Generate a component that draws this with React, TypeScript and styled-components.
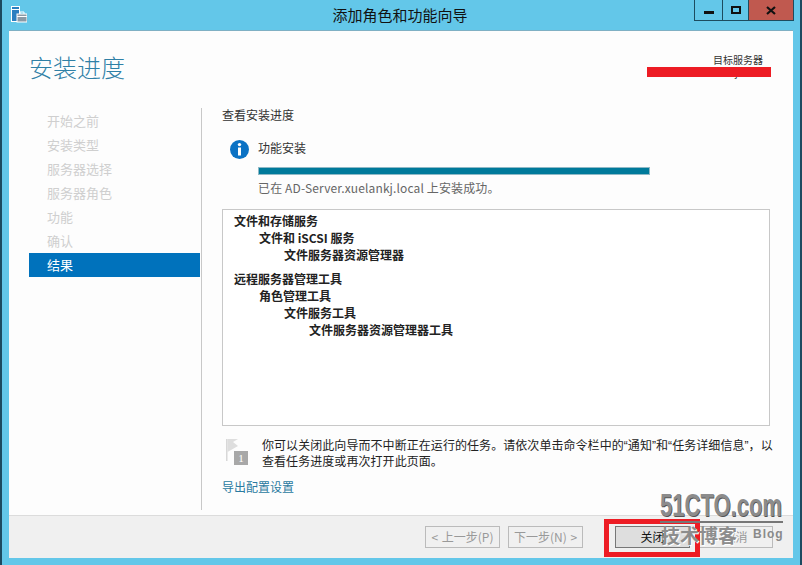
import styled, { createGlobalStyle } from "styled-components";

const GlobalStyle = createGlobalStyle`
    html, body {
        margin: 0;
        padding: 0;
        width: 802px;
        height: 565px;
        overflow: hidden;
    }
    body {
        font-family: "Noto Sans CJK SC", "Liberation Sans", sans-serif;
        font-size: 12px;
        color: #333;
    }
`

const Frame = styled.div`
    position: relative;
    width: 802px;
    height: 565px;
    box-sizing: border-box;
    background: #63c7e9;
    display: flex;
    flex-direction: column;
    border-left: 2px solid #1c4a60;
    border-right: 2px solid #1c4a60;
    padding: 0 7px 7px 7px;
`
const TitleBar = styled.div`
    height: 30px;
    flex: none;
    display: flex;
    align-items: flex-start;
    position: relative;
`
const AppIcon = styled.svg`
    position: absolute;
    left: 2px;
    top: 6px;
`
const TitleText = styled.div`
    width: 100%;
    text-align: center;
    font-size: 15px;
    line-height: 29px;
    color: #111;
    padding-right: 2px;
`
const Controls = styled.div`
    position: absolute;
    right: -1px;
    top: 0;
    display: flex;
    height: 21px;
    border: 1px solid #1d4c5f;
    border-top: none;
    box-sizing: border-box;
`
const ControlButton = styled.div<{ $w: number; $close?: boolean }>`
    width: ${(p) => p.$w}px;
    display: flex;
    align-items: center;
    justify-content: center;
    background: ${(p) => (p.$close ? "#c0594f" : "transparent")};
    & + & {
        border-left: 1px solid #1d4c5f;
    }
`
const Client = styled.div`
    flex: 1;
    min-height: 0;
    background: #fdfdfd;
    border-top: 1px solid #7fb0c4;
    display: flex;
    flex-direction: column;
`
const Header = styled.div`
    height: 77px;
    flex: none;
    display: flex;
    justify-content: space-between;
    padding: 0 30px 0 20px;
`
const PageTitle = styled.h1`
    margin: 16px 0 0;
    font-size: 24px;
    line-height: 40px;
    font-weight: 300;
    color: #2f80a6;
`
const ServerBlock = styled.div`
    margin-top: 23px;
    font-size: 10px;
    line-height: 12px;
    color: #333;
    text-align: right;
`
const Body = styled.div`
    flex: 1;
    min-height: 0;
    display: flex;
    padding-left: 20px;
`
const Sidebar = styled.nav`
    width: 173px;
    flex: none;
    box-sizing: border-box;
    border-right: 1px solid #c8c8c8;
    padding-top: 1px;
    margin-bottom: 5px;
`
const NavItem = styled.div<{ $active?: boolean }>`
    height: 24px;
    width: 171px;
    line-height: 24px;
    font-size: 13px;
    padding-left: 18px;
    box-sizing: border-box;
    color: ${(p) => (p.$active ? "#fff" : "#cfcfcf")};
    background: ${(p) => (p.$active ? "#0072bc" : "transparent")};
`
const Content = styled.div`
    flex: 1;
    padding: 0 23px 0 20px;
    min-width: 0;
`
const SectionTitle = styled.div`
    font-size: 12px;
    line-height: 16px;
    margin-top: -1px;
    margin-bottom: 17px;
`
const StatusRow = styled.div`
    display: flex;
    padding-left: 8px;
`
const StatusText = styled.div`
    margin-left: 9px;
    width: 392px;
`
const StatusLabel = styled.div`
    font-size: 12px;
    line-height: 16px;
`
const ProgressTrack = styled.div`
    height: 8px;
    margin: 11px 0 4px;
    background: #007a9b;
    border: 1px solid #8fb9c6;
    box-sizing: border-box;
`
const StatusNote = styled.div`
    font-size: 12px;
    line-height: 18px;
    color: #666;
    white-space: nowrap;
    letter-spacing: 0.13px;
`
const TreeBox = styled.div`
    height: 217px;
    margin-top: 12px;
    box-sizing: border-box;
    border: 1px solid #c8c8c8;
    background: #fff;
    padding: 2px 11px;
`
const TreeRow = styled.div<{ $level: number; $gap?: boolean }>`
    font-size: 12px;
    font-weight: 700;
    line-height: 17px;
    color: #222;
    padding-left: ${(p) => p.$level * 25}px;
    margin-top: ${(p) => (p.$gap ? 7 : 0)}px;
`
const Notice = styled.div`
    display: flex;
    margin-top: 11px;
    padding-left: 4px;
`
const FlagIcon = styled.svg`
    flex: none;
`
const NoticeText = styled.div`
    margin-left: 14px;
    font-family: "Liberation Sans", "Noto Sans CJK SC", sans-serif;
    font-size: 12px;
    line-height: 16px;
    color: #222;
    white-space: nowrap;
    padding-top: 1px;
    letter-spacing: 0.06px;
`
const ExportLink = styled.a`
    display: block;
    margin-top: 9px;
    font-size: 12px;
    line-height: 16px;
    color: #2a7aa0;
    text-decoration: none;
`
const Footer = styled.div`
    height: 43px;
    flex: none;
    box-sizing: border-box;
    background: #f0f0f0;
    border-top: 1px solid #dcdcdc;
    display: flex;
    align-items: flex-start;
    padding: 10px 0 0 416px;
`
const WizardButton = styled.div<{ $enabled?: boolean; $gap?: number }>`
    width: 75px;
    height: 22px;
    box-sizing: border-box;
    margin-left: ${(p) => p.$gap ?? 0}px;
    border: 1px solid ${(p) => (p.$enabled ? "#777" : "#bbb")};
    background: ${(p) => (p.$enabled ? "#dedede" : "transparent")};
    color: ${(p) => (p.$enabled ? "#111" : "#999")};
    font-size: 12px;
    line-height: 20px;
    text-align: center;
    white-space: nowrap;
    word-spacing: 1px;
`
/* overlays: offsets count from the frame's padding box, 2px in from the page edge */
const RedactBar = styled.div`
    position: absolute;
    left: 645px;
    top: 67px;
    width: 124px;
    height: 10px;
    background: #ed1c24;
`
const RedOutline = styled.div`
    position: absolute;
    left: 602px;
    top: 519px;
    width: 96px;
    height: 38px;
    box-sizing: border-box;
    border: 5px solid #ed1c24;
`
const MarkTitle = styled.div`
    position: absolute;
    left: 658px;
    top: 490px;
    width: 123px;
    height: 31px;
    border-bottom: 2px solid #777;
`
const MarkGlyphs = styled.div`
    font-family: "Liberation Sans", sans-serif;
    font-size: 31px;
    font-weight: 700;
    line-height: 31px;
    color: #8c8c8c;
    text-shadow: 1px 1px 0 #555;
    white-space: nowrap;
    transform: scaleX(0.71);
    transform-origin: left top;
`
const MarkSub = styled.div`
    position: absolute;
    left: 659px;
    top: 522px;
    font-size: 19px;
    line-height: 26px;
    font-weight: 700;
    color: #8d8d8d;
    text-shadow: 1px 1px 0 #fff;
    white-space: nowrap;
`
const MarkBlog = styled.div`
    position: absolute;
    left: 751px;
    top: 526px;
    font-family: "Liberation Sans", sans-serif;
    font-size: 12px;
    line-height: 16px;
    font-weight: 700;
    color: #8a8a8a;
    letter-spacing: 1px;
`

const steps = ["开始之前", "安装类型", "服务器选择", "服务器角色", "功能", "确认", "结果"];

const tree: { text: string; level: number; gap?: boolean }[] = [
    { text: "文件和存储服务", level: 0 },
    { text: "文件和 iSCSI 服务", level: 1 },
    { text: "文件服务器资源管理器", level: 2 },
    { text: "远程服务器管理工具", level: 0, gap: true },
    { text: "角色管理工具", level: 1 },
    { text: "文件服务工具", level: 2 },
    { text: "文件服务器资源管理器工具", level: 3 },
];

export default function App() {
    return (
        <>
            <GlobalStyle />
            <Frame>
                <TitleBar>
                    <AppIcon width="16" height="18" viewBox="0 0 16 18">
                        <rect x="0.5" y="0.5" width="8" height="15" fill="#2a7fc0" stroke="#fff" />
                        <rect x="1" y="3" width="7" height="1" fill="#fff" />
                        <rect x="6" y="8" width="10" height="8" fill="#8a9aa6" stroke="#fff" />
                        <path d="M9 8V6h4v2" fill="none" stroke="#fff" />
                        <rect x="6" y="10" width="10" height="1" fill="#fff" />
                    </AppIcon>
                    <TitleText>添加角色和功能向导</TitleText>
                    <Controls>
                        <ControlButton $w={27}>
                            <svg width="10" height="10" viewBox="0 0 10 10">
                                <rect x="0" y="6" width="10" height="3" fill="#111" />
                            </svg>
                        </ControlButton>
                        <ControlButton $w={25}>
                            <svg width="10" height="9" viewBox="0 0 10 9">
                                <rect x="1" y="1" width="8" height="6" fill="none" stroke="#111" strokeWidth="2" />
                            </svg>
                        </ControlButton>
                        <ControlButton $w={44} $close>
                            <svg width="10" height="9" viewBox="0 0 10 9">
                                <path d="M1 1l8 7M9 1L1 8" fill="none" stroke="#111" strokeWidth="2.2" />
                            </svg>
                        </ControlButton>
                    </Controls>
                </TitleBar>
                <Client>
                    <Header>
                        <PageTitle>安装进度</PageTitle>
                        <ServerBlock>
                            目标服务器
                            <br />
                            AD-Server.xuelankj.local
                        </ServerBlock>
                    </Header>
                    <Body>
                        <Sidebar>
                            {steps.map((s, i) => (
                                <NavItem key={s} $active={i === steps.length - 1}>{s}</NavItem>
                            ))}
                        </Sidebar>
                        <Content>
                            <SectionTitle>查看安装进度</SectionTitle>
                            <StatusRow>
                                <svg width="19" height="19" viewBox="0 0 19 19">
                                    <circle cx="9.5" cy="9.5" r="9.5" fill="#0b72c4" />
                                    <circle cx="9.5" cy="4.6" r="1.7" fill="#fff" />
                                    <rect x="8" y="7.5" width="3" height="8" fill="#fff" />
                                </svg>
                                <StatusText>
                                    <StatusLabel>功能安装</StatusLabel>
                                    <ProgressTrack />
                                    <StatusNote>已在 AD-Server.xuelankj.local 上安装成功。</StatusNote>
                                </StatusText>
                            </StatusRow>
                            <TreeBox>
                                {tree.map((r) => (
                                    <TreeRow key={r.text} $level={r.level} $gap={r.gap}>{r.text}</TreeRow>
                                ))}
                            </TreeBox>
                            <Notice>
                                <FlagIcon width="22" height="28" viewBox="0 0 22 28">
                                    <path d="M0 2h1.5v22H0z" fill="#d8d8d8" />
                                    <path d="M1.5 2H12L7 5l5 4-10.5 6z" fill="#dedede" />
                                    <rect x="8" y="14" width="14" height="14" fill="#a8a8a8" />
                                    <text x="15" y="25" textAnchor="middle" fontSize="11" fontFamily="Liberation Serif, serif" fill="#fff">1</text>
                                </FlagIcon>
                                <NoticeText>
                                    你可以关闭此向导而不中断正在运行的任务。请依次单击命令栏中的“通知”和“任务详细信息”，以
                                    <br />
                                    查看任务进度或再次打开此页面。
                                </NoticeText>
                            </Notice>
                            <ExportLink>导出配置设置</ExportLink>
                        </Content>
                    </Body>
                    <Footer>
                        <WizardButton>&lt; 上一步(P)</WizardButton>
                        <WizardButton $gap={8}>下一步(N) &gt;</WizardButton>
                        <WizardButton $gap={32} $enabled>关闭</WizardButton>
                        <WizardButton $gap={8}>取消</WizardButton>
                    </Footer>
                </Client>
                <RedactBar />
                <RedOutline />
                <MarkTitle>
                    <MarkGlyphs>51CTO.com</MarkGlyphs>
                </MarkTitle>
                <MarkSub>技术博客</MarkSub>
                <MarkBlog>Blog</MarkBlog>
            </Frame>
        </>
    );
}
